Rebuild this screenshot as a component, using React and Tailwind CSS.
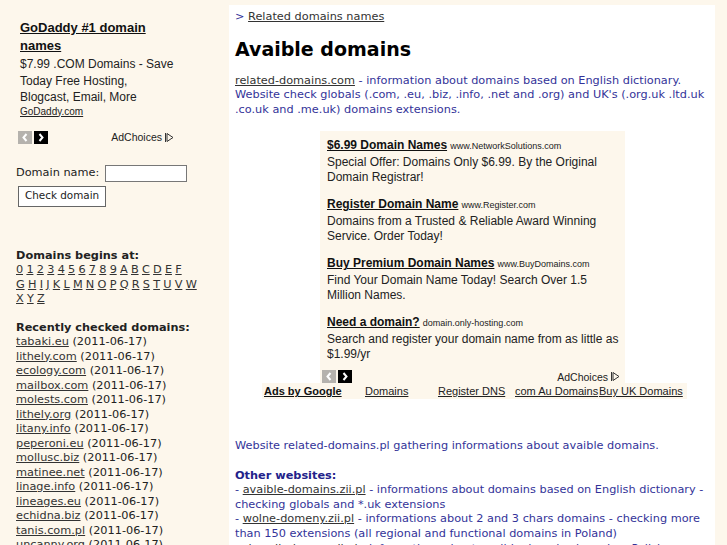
import React from 'react';

const dejavu = { fontFamily: '"DejaVu Sans", Verdana, sans-serif' };
const arial = { fontFamily: '"Liberation Sans", Arial, sans-serif' };

const letterRows = [
  '0123456789ABCDEF'.split(''),
  'GHIJKLMNOPQRSTUVW'.split(''),
  'XYZ'.split(''),
];

const recent = [
  'tabaki.eu',
  'lithely.com',
  'ecology.com',
  'mailbox.com',
  'molests.com',
  'lithely.org',
  'litany.info',
  'peperoni.eu',
  'mollusc.biz',
  'matinee.net',
  'linage.info',
  'lineages.eu',
  'echidna.biz',
  'tanis.com.pl',
  'uncanny.org',
  'lithely.net',
];

const ads = [
  {
    title: '$6.99 Domain Names',
    url: 'www.NetworkSolutions.com',
    text: 'Special Offer: Domains Only $6.99. By the Original Domain Registrar!',
  },
  {
    title: 'Register Domain Name',
    url: 'www.Register.com',
    text: 'Domains from a Trusted & Reliable Award Winning Service. Order Today!',
  },
  {
    title: 'Buy Premium Domain Names',
    url: 'www.BuyDomains.com',
    text: 'Find Your Domain Name Today! Search Over 1.5 Million Names.',
  },
  {
    title: 'Need a domain?',
    url: 'domain.only-hosting.com',
    text: 'Search and register your domain name from as little as $1.99/yr',
  },
];

const AdNav = () => (
  <div className="flex gap-[2px]">
    <span className="w-[14px] h-[13px] bg-[#b5b2ad] flex items-center justify-center">
      <svg width="8" height="9" viewBox="0 0 8 9">
        <path d="M5.5 1 L2.5 4.5 L5.5 8" stroke="#fff" strokeWidth="2" fill="none" />
      </svg>
    </span>
    <span className="w-[14px] h-[13px] bg-black flex items-center justify-center">
      <svg width="8" height="9" viewBox="0 0 8 9">
        <path d="M2.5 1 L5.5 4.5 L2.5 8" stroke="#fff" strokeWidth="2" fill="none" />
      </svg>
    </span>
  </div>
);

const AdChoices = () => (
  <span className="flex items-center gap-[2px] text-[10.5px] text-[#222]">
    AdChoices
    <svg width="10" height="11" viewBox="0 0 10 11">
      <path d="M1.5 1 V10" stroke="#333" strokeWidth="1" />
      <path d="M3 1.5 L9 5.5 L3 9.5 Z" stroke="#333" strokeWidth="1" fill="none" />
    </svg>
  </span>
);

export default function App() {
  return (
    <div className="min-h-screen bg-[#fdf7ec] flex text-[#333399]" style={dejavu}>
      {/* Sidebar */}
      <div className="w-[229px] shrink-0 pl-[16px] pt-[19px]">
        <div style={arial} className="pl-[4px] w-[164px] text-[#222]">
          <a className="block text-[13px] font-bold underline leading-[18px] text-[#111] w-[150px]">
            GoDaddy #1 domain names
          </a>
          <p className="text-[12px] leading-[16.5px] mt-[1px]">
            $7.99 .COM Domains - Save Today Free Hosting, Blogcast, Email, More
          </p>
          <a className="block text-[10px] underline leading-[11px]">GoDaddy.com</a>
        </div>
        <div className="flex items-center justify-between w-[158px] pl-[2px] mt-[13px]" style={arial}>
          <AdNav />
          <AdChoices />
        </div>

        <div className="mt-[20px] flex items-center text-[11.3px] text-[#222]">
          <span>Domain name:</span>
          <input className="ml-[6px] w-[82px] h-[17px] bg-white border border-[#777]" />
        </div>
        <button className="mt-[3px] ml-[2px] h-[21px] px-[6px] bg-white border border-[#666] text-[10.4px] text-[#222]">
          Check domain
        </button>

        <div className="mt-[42px] text-[11.3px] leading-[14.5px] text-[#222]">
          <div className="font-bold">Domains begins at:</div>
          {letterRows.map((row, i) => (
            <div key={i} className="whitespace-nowrap tracking-[-0.2px]">
              {row.map((l, j) => (
                <React.Fragment key={l}>
                  <a className="underline text-[#333]">{l}</a>
                  {j < row.length - 1 ? ' ' : ''}
                </React.Fragment>
              ))}
            </div>
          ))}
        </div>

        <div className="mt-[14px] text-[11.3px] leading-[14.5px] text-[#222]">
          <div className="font-bold">Recently checked domains:</div>
          {recent.map((d) => (
            <div key={d} className="whitespace-nowrap">
              <a className="underline text-[#333]">{d}</a> (2011-06-17)
            </div>
          ))}
        </div>
      </div>

      {/* Main */}
      <div className="flex-1 mt-[5px] mr-[12px] bg-white pl-[6px] pr-[4px] pt-[5px] text-[11.3px] leading-[14.6px]">
        <div className="text-[#222]">
          <span className="text-[#333399]">&gt;</span>{' '}
          <a className="underline text-[#333]">Related domains names</a>
        </div>
        <h1 className="text-[19px] font-bold text-black mt-[12px] leading-[24px]">Avaible domains</h1>
        <p className="mt-[13px]">
          <a className="underline text-[#333]">related-domains.com</a> - information about domains based on English dictionary.
          Website check globals (.com, .eu, .biz, .info, .net and .org) and UK's (.org.uk .ltd.uk .co.uk and .me.uk) domains extensions.
        </p>

        <div className="mt-[14px] ml-[27px] w-[425px]" style={arial}>
          <div className="ml-[58px] w-[305px] bg-[#fdf7ec] pl-[7px] pr-[6px] pt-[6px] text-[#222]">
            {ads.map((ad, i) => (
              <div key={ad.title} className={i < ads.length - 1 ? 'mb-[11px]' : 'mb-[8px]'}>
                <div className="leading-[16px]">
                  <a className="text-[12px] font-bold underline text-[#111]">{ad.title}</a>{' '}
                  <span className="text-[9px]">{ad.url}</span>
                </div>
                <p className="text-[12px] leading-[15px] mt-[1px]">{ad.text}</p>
              </div>
            ))}
            <div className="flex items-center justify-between -ml-[5px] -mr-[1px] h-[13px]">
              <AdNav />
              <AdChoices />
            </div>
          </div>
          <div className="flex bg-[#fdf7ec] text-[11px] leading-[16px] text-[#222] pl-[2px] h-[16px]">
            <a className="w-[101px] font-bold underline text-[#111]">Ads by Google</a>
            <a className="w-[73px] underline">Domains</a>
            <a className="w-[77px] underline">Register DNS</a>
            <a className="w-[84px] underline">com Au Domains</a>
            <a className="underline whitespace-nowrap">Buy UK Domains</a>
          </div>
        </div>

        <p className="mt-[40px]">Website related-domains.pl gathering informations about avaible domains.</p>
        <div className="mt-[14.6px] font-bold text-[#22228a]">Other websites:</div>
        <p>
          - <a className="underline text-[#333]">avaible-domains.zii.pl</a> - informations about domains based on English dictionary - checking globals and *.uk extensions
        </p>
        <p>
          - <a className="underline text-[#333]">wolne-domeny.zii.pl</a> - informations about 2 and 3 chars domains - checking more than 150 extensions (all regional and functional domains in Poland)
        </p>
        <p>
          - <a className="underline text-[#333]">slownik-domen.zii.pl</a> - informations about avaible domains based on Polish dictionary - checking
          globals and .pl extensions
        </p>
      </div>
    </div>
  );
}
